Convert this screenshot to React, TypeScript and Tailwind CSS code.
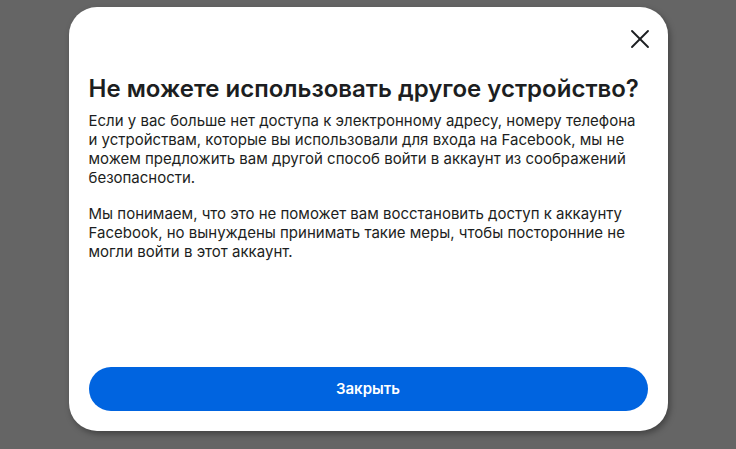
import { X } from 'lucide-react';

export default function App() {
  return (
    <div
      className="w-[736px] h-[449px] bg-[#656565] flex justify-center pt-[7px]"
      style={{ fontFamily: 'Inter, "Noto Sans", sans-serif' }}
    >
      <div className="w-[599px] h-[424px] bg-white rounded-[28px] shadow-[2px_3px_6px_rgba(0,0,0,0.35)] flex flex-col px-5 pb-5">
        <div className="pt-4 h-[48px] flex justify-end">
          <button className="text-[#1c1e21] -mr-[8px]">
            <X className="w-[32px] h-[32px]" strokeWidth={1.4} />
          </button>
        </div>
        <h2 className="text-[24px] leading-[29px] font-semibold text-[#1c1e21] mt-[19px]">
          Не можете использовать другое устройство?
        </h2>
        <div className="mt-[8px] text-[15px] leading-[19px] text-[#1c1e21] space-y-[17px]">
          <p>
            Если у вас больше нет доступа к электронному адресу, номеру телефона и устройствам, которые вы
            использовали для входа на Facebook, мы не можем предложить вам другой способ войти в аккаунт из
            соображений безопасности.
          </p>
          <p>
            Мы понимаем, что это не поможет вам восстановить доступ к аккаунту Facebook, но вынуждены принимать
            такие меры, чтобы посторонние не могли войти в этот аккаунт.
          </p>
        </div>
        <div className="flex-1" />
        <button className="h-[44px] w-full rounded-full bg-[#0064e0] text-white text-[15px] font-semibold">
          Закрыть
        </button>
      </div>
    </div>
  );
}
